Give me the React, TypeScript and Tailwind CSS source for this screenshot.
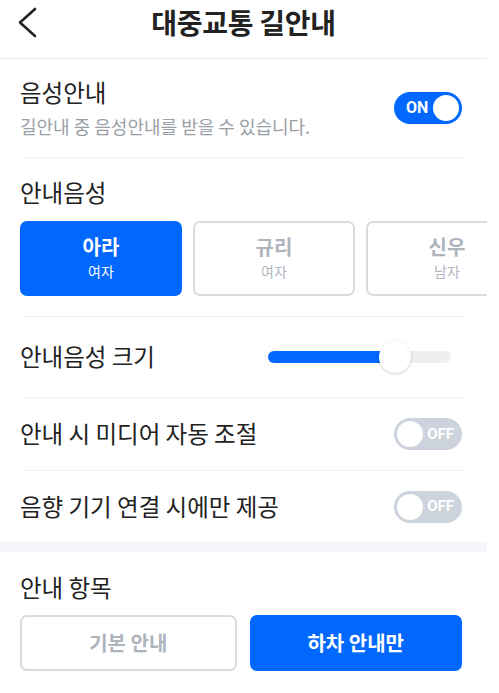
import React from "react";

const font = { fontFamily: '"Noto Sans CJK KR", "Noto Sans", sans-serif' };

function Toggle({ on }: { on: boolean }) {
  if (on) {
    return (
      <div className="w-[68px] h-[32px] rounded-full bg-[#0068ff] flex items-center justify-between pl-[12px] pr-[3px]">
        <span className="text-white text-[16px] font-bold leading-none" style={{ fontFamily: '"Roboto", sans-serif' }}>ON</span>
        <div className="w-[26px] h-[26px] rounded-full bg-white" />
      </div>
    );
  }
  return (
    <div className="w-[68px] h-[32px] rounded-full bg-[#cdd3dc] flex items-center justify-between pl-[3px] pr-[8px]">
      <div className="w-[26px] h-[26px] rounded-full bg-white" />
      <span className="text-white text-[15px] font-bold leading-none" style={{ fontFamily: '"Roboto", sans-serif' }}>OFF</span>
    </div>
  );
}

function Divider() {
  return <div className="mx-[23px] h-px bg-[#f0f1f3]" />;
}

function VoiceCard({ name, gender, active }: { name: string; gender: string; active?: boolean }) {
  const box = active
    ? "shrink-0 w-[162px] h-[75px] rounded-[7px] bg-[#0068ff] flex flex-col items-center justify-center"
    : "shrink-0 w-[162px] h-[75px] rounded-[7px] border-2 border-[#d8dce2] flex flex-col items-center justify-center";
  const color = active ? "text-white" : "text-[#aeb4be]";
  return (
    <div className={box}>
      <span className={`block ${color} text-[20px] font-bold leading-[25px]`}>{name}</span>
      <span className={`block ${color} text-[14px] leading-[24px]`}>{gender}</span>
    </div>
  );
}

export default function App() {
  return (
    <div className="w-[487px] bg-white text-[#222]" style={font}>
      {/* Header */}
      <div className="relative h-[59px] flex items-center justify-center border-b border-[#e8e9ec]">
        <svg className="absolute left-[14px] top-[6px]" width="28" height="34" viewBox="0 0 28 34" fill="none">
          <path d="M21 3 L6 16.5 L21 30" stroke="#222" strokeWidth="2.6" strokeLinecap="round" strokeLinejoin="round" />
        </svg>
        <h1 className="text-[28px] leading-[36px] font-bold text-[#222] -mt-[14px] tracking-[-0.3px]">대중교통 길안내</h1>
      </div>

      {/* 음성안내 */}
      <div className="flex items-center justify-between px-[20px] pt-[18px] pb-[19px]">
        <div className="flex flex-col">
          <span className="text-[23.5px] leading-[30px] text-[#222]">음성안내</span>
          <span className="text-[18px] leading-[24px] text-[#9a9ea6] mt-[7px]">길안내 중 음성안내를 받을 수 있습니다.</span>
        </div>
        <div className="mr-[5px]">
          <Toggle on />
        </div>
      </div>
      <Divider />

      {/* 안내음성 */}
      <div className="pt-[19px] pb-[20px]">
        <div className="px-[20px] text-[23.5px] leading-[30px] text-[#222]">안내음성</div>
        <div className="flex gap-[11px] pl-[20px] mt-[14px] overflow-hidden">
          <VoiceCard name="아라" gender="여자" active />
          <VoiceCard name="규리" gender="여자" />
          <VoiceCard name="신우" gender="남자" />
        </div>
      </div>
      <Divider />

      {/* 안내음성 크기 */}
      <div className="flex items-center justify-between h-[80px] px-[20px]">
        <span className="text-[23.5px] text-[#222]">안내음성 크기</span>
        <div className="relative w-[183px] h-[12px] rounded-full bg-[#efefef] mr-[16px]">
          <div className="absolute left-0 top-0 h-[12px] w-[127px] rounded-full bg-[#0068ff]" />
          <div className="absolute left-[111px] top-[-10px] w-[32px] h-[32px] rounded-full bg-white shadow-[0_1px_3px_rgba(0,0,0,0.2)]" />
        </div>
      </div>
      <Divider />

      {/* 안내 시 미디어 자동 조절 */}
      <div className="flex items-center justify-between h-[72px] px-[20px]">
        <span className="text-[23.5px] text-[#222]">안내 시 미디어 자동 조절</span>
        <div className="mr-[5px]">
          <Toggle on={false} />
        </div>
      </div>
      <Divider />

      {/* 음향 기기 연결 시에만 제공 */}
      <div className="flex items-center justify-between h-[71px] px-[20px]">
        <span className="text-[23.5px] text-[#222]">음향 기기 연결 시에만 제공</span>
        <div className="mr-[5px]">
          <Toggle on={false} />
        </div>
      </div>

      <div className="h-[10px] bg-[#f5f6f9]" />

      {/* 안내 항목 */}
      <div className="px-[20px] pt-[20px] pb-[21px]">
        <div className="text-[23.5px] leading-[30px] text-[#222]">안내 항목</div>
        <div className="flex gap-[13px] mt-[13px] pr-[5px]">
          <div className="flex-1 h-[56px] rounded-[7px] border-2 border-[#d8dce2] flex items-center justify-center">
            <span className="text-[#aeb4be] text-[20px] font-bold">기본 안내</span>
          </div>
          <div className="flex-1 h-[56px] rounded-[7px] bg-[#0068ff] flex items-center justify-center">
            <span className="text-white text-[20px] font-bold">하차 안내만</span>
          </div>
        </div>
      </div>
    </div>
  );
}
